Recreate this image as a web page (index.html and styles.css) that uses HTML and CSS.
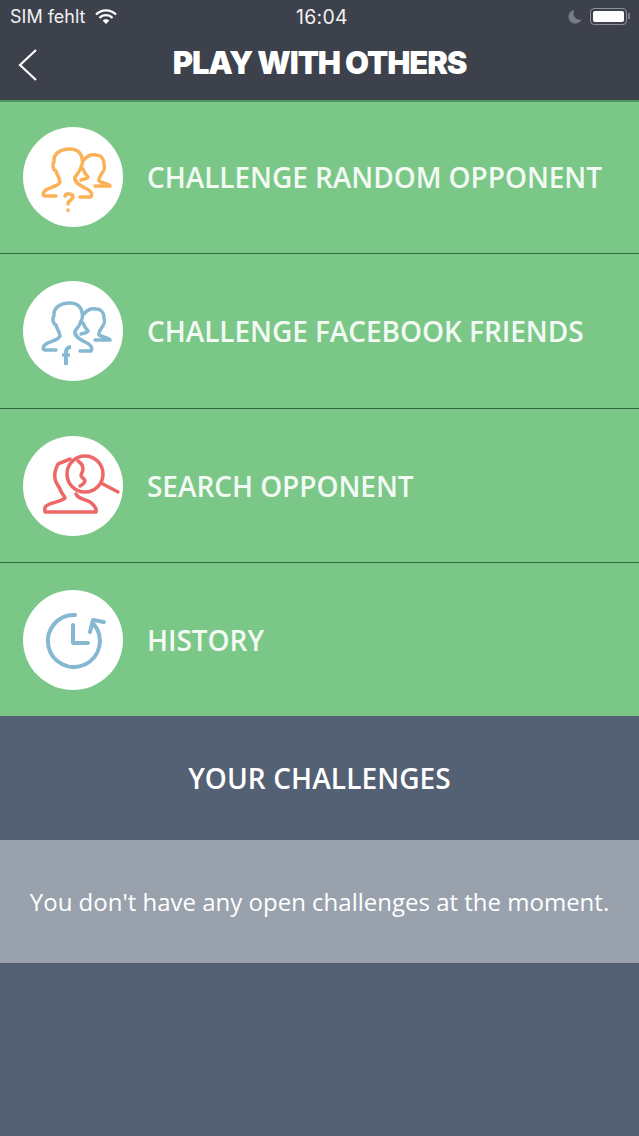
FILE: index.html
```html
<!DOCTYPE html>
<html lang="en">
<head>
    <meta charset="UTF-8">
    <title>Play with others</title>
    <link rel="stylesheet" href="styles.css">
</head>
<body>
<div class="app">
    <header class="topbar">
        <div class="status">
            <div class="status-left">
                <span>SIM fehlt</span>
                <svg class="wifi" width="22" height="15" viewBox="0 0 22 15">
                    <path d="M1 5.500a14 14 0 0 1 20 0" fill="none" stroke="#fff" stroke-width="2.200"/>
                    <path d="M4.500 9a9 9 0 0 1 13 0" fill="none" stroke="#fff" stroke-width="2.200"/>
                    <path d="M7.600 11.600a5 5 0 0 1 6.800 0L11 15z" fill="#fff"/>
                </svg>
            </div>
            <div class="status-time">16:04</div>
            <div class="status-right">
                <svg width="14" height="15" viewBox="0 0 14 15">
                    <path d="M6.500 1a6.800 6.800 0 1 0 7 9.600A6.400 6.400 0 0 1 6.500 1z" fill="#777c86"/>
                </svg>
                <div class="battery"><div class="battery-fill"></div></div>
                <div class="battery-tip"></div>
            </div>
        </div>
        <div class="navbar">
            <svg class="back" width="20" height="34" viewBox="0 0 20 34">
                <path d="M18 2 L2 17 L18 32" fill="none" stroke="#fff" stroke-width="2.200"/>
            </svg>
            <h1>PLAY WITH OTHERS</h1>
        </div>
    </header>

    <ul class="menu">
        <li class="menu-item">
            <div class="disc">
                <svg width="100" height="100" viewBox="0 0 100 100" fill="none" stroke="#fbb158" stroke-width="3.500" stroke-linecap="round" stroke-linejoin="round">
                    <path d="M33 69H22C19 69 20 65 23 63C27 60 35 60 37 55C37 52 34 48 33 44C30 43 29 37 31 35C30 27 37 22 47 22C52 22 56 24 58 28C60 33 60 37 58 40C57 45 54 47 52 50C51 55 56 58 62 61C67 63 70 66 68 70H57"/>
                    <path d="M61 33C64 29 68 27 73 28C78 28 81 32 81 37C82 40 81 44 79 46C77 50 75 52 76 54C78 56 86 56 87 59H72"/>
                    <path d="M60 42C61 45 63 48 65 50C64 52 61 52 58 53"/>
                    <path d="M42 69C43 66 50 66 50 70C50 73 45 73 45 77"/>
                    <path d="M45 83v.5"/>
                </svg>
            </div>
            <span class="label">CHALLENGE RANDOM OPPONENT</span>
        </li>
        <li class="menu-item">
            <div class="disc">
                <svg width="100" height="100" viewBox="0 0 100 100" fill="none" stroke="#86b8d2" stroke-width="3.500" stroke-linecap="round" stroke-linejoin="round">
                    <path d="M33 69H22C19 69 20 65 23 63C27 60 35 60 37 55C37 52 34 48 33 44C30 43 29 37 31 35C30 27 37 22 47 22C52 22 56 24 58 28C60 33 60 37 58 40C57 45 54 47 52 50C51 55 56 58 62 61C67 63 70 66 68 70H57"/>
                    <path d="M61 33C64 29 68 27 73 28C78 28 81 32 81 37C82 40 81 44 79 46C77 50 75 52 76 54C78 56 86 56 87 59H72"/>
                    <path d="M60 42C61 45 63 48 65 50C64 52 61 52 58 53"/>
                    <path d="M43 84V71C43 68 45 66 48 66" stroke-width="4" stroke-linecap="butt"/>
                    <path d="M39 74H47" stroke-width="3.500" stroke-linecap="butt"/>
                </svg>
            </div>
            <span class="label">CHALLENGE FACEBOOK FRIENDS</span>
        </li>
        <li class="menu-item">
            <div class="disc">
                <svg width="100" height="100" viewBox="0 0 100 100" fill="none" stroke="#ee6767" stroke-width="3.500" stroke-linecap="round" stroke-linejoin="round">
                    <circle cx="62" cy="38" r="18"/>
                    <path d="M78 47L95 56"/>
                    <path d="M47 23C43 25 39 26 35 28C33 32 31 37 32 42C32 46 35 49 37 53C38 57 41 59 42 62C38 66 28 66 23 70C21 72 22 74 22 76H73C74 72 71 69 67 66C62 63 55 63 53 58"/>
                    <path d="M55 25C58 27 60 30 60 33C60 36 58 37 58 40C59 42 62 43 62 45C61 48 59 49 57 50"/>
                </svg>
            </div>
            <span class="label">SEARCH OPPONENT</span>
        </li>
        <li class="menu-item">
            <div class="disc">
                <svg width="100" height="100" viewBox="0 0 100 100" fill="none" stroke="#86b8d2" stroke-width="4" stroke-linecap="round" stroke-linejoin="round">
                    <path d="M52 25A26 26 0 1 0 71 34.500"/>
                    <path d="M67 42L70 30L81 32"/>
                    <path d="M50 35V53H65"/>
                </svg>
            </div>
            <span class="label">HISTORY</span>
        </li>
    </ul>

    <section class="challenges">
        <h2>YOUR CHALLENGES</h2>
        <p class="notice">You don't have any open challenges at the moment.</p>
    </section>
</div>
</body>
</html>
```

FILE: styles.css
```css
*{margin:0; padding:0; list-style:none; box-sizing:border-box;}
body{background:#546073; font-family:"Inter","Open Sans",sans-serif; color:#fff; overflow:hidden;}
.app{width:639px; height:1136px; display:flex; flex-direction:column;}

.topbar{height:102px; background:#3d414b; border-bottom:2px solid #4d9560;}
.status{height:32px; padding:0 9px 0 10px; display:flex; align-items:center; justify-content:space-between; position:relative; font-size:18px; color:#f1f2f3;}
.status-left{display:flex; align-items:center; gap:9px;}
.status-time{position:absolute; left:5px; right:0; top:5px; text-align:center; font-size:19.500px; letter-spacing:0.3px;}
.status-right{display:flex; align-items:center;}
.status-right svg{margin-right:8px; margin-left:1px;}
.battery{width:37px; height:17px; border:1px solid #8c8f96; border-radius:4px; padding:2px;}
.battery-fill{height:100%; background:#fff; border-radius:2px;}
.battery-tip{width:2px; height:6px; margin-left:1px; background:#777c86;}

.navbar{height:68px; position:relative; display:flex; align-items:center; justify-content:center; padding-bottom:8px;}
.back{position:absolute; left:18px; top:16px;}
.navbar h1{font-size:31px; font-weight:900; letter-spacing:-1.100px;}

.menu{display:flex; flex-direction:column;}
.menu-item{height:154px; padding-left:23px; background:#7bc788; border-bottom:1px solid #2f6b3f; display:flex; align-items:center; gap:24px;}
.menu-item:nth-child(1){height:152px; padding-bottom:1px;}
.menu-item:nth-child(2){height:155px;}
.menu-item:last-child{height:153px; border-bottom:0;}
.disc{width:100px; height:100px; flex:none; border-radius:50%; background:#fff;}
.disc svg{display:block;}
.label{font-family:"Open Sans",sans-serif; font-size:28px; font-weight:600; color:#f3faf4; letter-spacing:-0.05px;}

.challenges{flex:1; background:#546073;}
.challenges h2{height:124px; display:flex; align-items:center; justify-content:center; font-family:"Open Sans",sans-serif; font-size:28px; font-weight:600; letter-spacing:0.1px;}
.notice{height:123px; background:#99a1ad; display:flex; align-items:center; justify-content:center; font-family:"Open Sans",sans-serif; font-size:24px; color:#fff;}
```
